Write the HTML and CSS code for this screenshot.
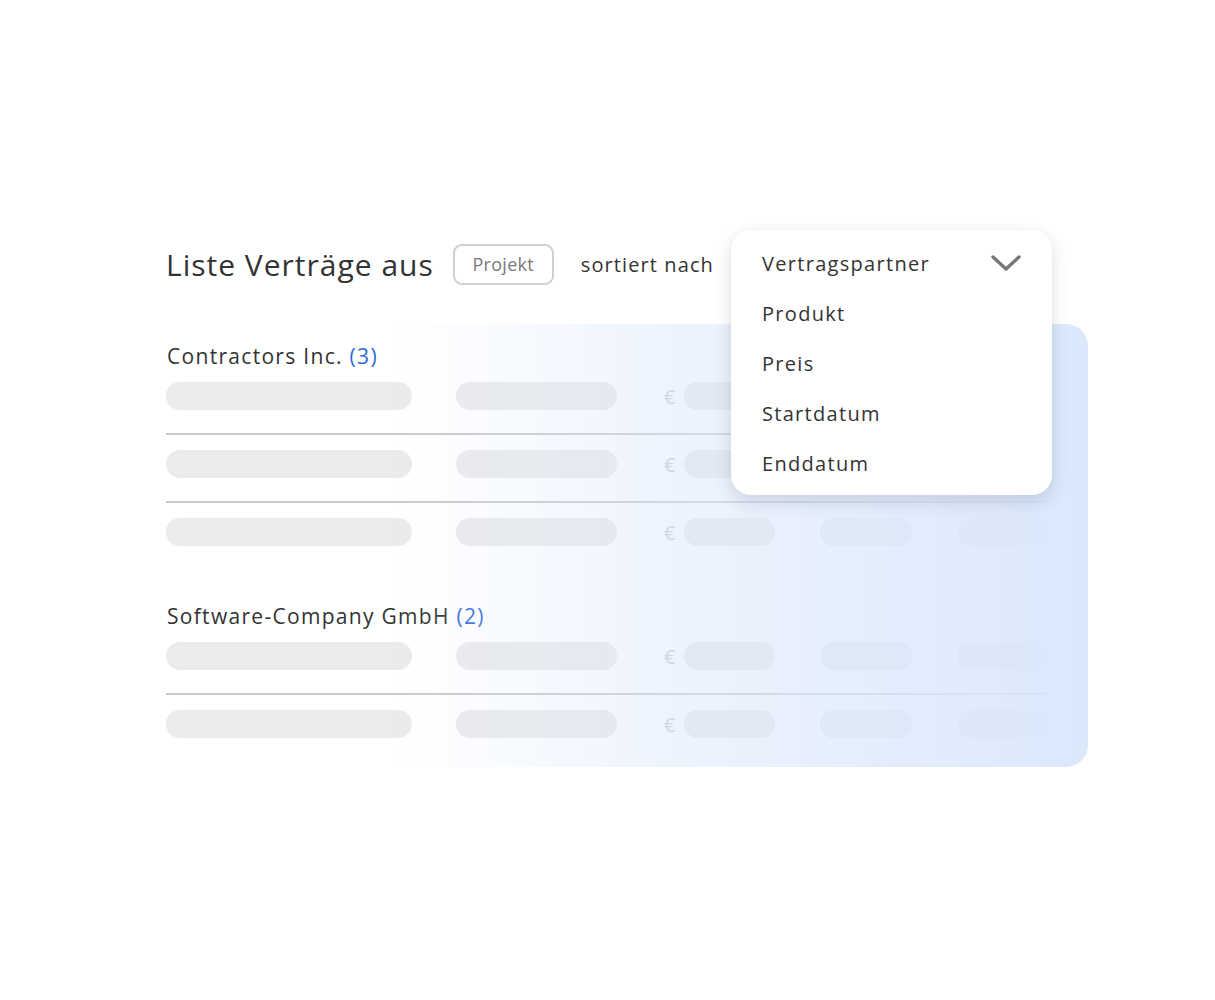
FILE: index.html
```html
<!DOCTYPE html>
<html lang="de">
<head>
    <meta charset="UTF-8">
    <meta name="viewport" content="width=device-width, initial-scale=1.0">
    <title>Verträge</title>
    <link rel="stylesheet" href="styles.css">
</head>
<body>

<div class="card">
    <div class="toolbar">
        <h1 class="title">Liste Verträge aus</h1>
        <span class="chip">Projekt</span>
        <span class="label">sortiert nach</span>
    </div>

    <ul class="dropdown">
        <li class="selected">
            Vertragspartner
            <svg class="chevron" width="30" height="16" viewBox="0 0 30 16">
                <path d="M2 2 L15 14 L28 2" fill="none" stroke="#777" stroke-width="3.4" stroke-linecap="round" stroke-linejoin="round"/>
            </svg>
        </li>
        <li>Produkt</li>
        <li>Preis</li>
        <li>Startdatum</li>
        <li>Enddatum</li>
    </ul>

    <div class="panel">
        <section class="group">
            <h2 class="group-title">Contractors Inc. <span class="count">(3)</span></h2>
            <div class="row">
                <span class="pill w1"></span><span class="pill w2"></span>
                <span class="euro">€</span><span class="pill w3"></span>
                <span class="pill w4"></span><span class="pill w5"></span>
            </div>
            <div class="row">
                <span class="pill w1"></span><span class="pill w2"></span>
                <span class="euro">€</span><span class="pill w3"></span>
                <span class="pill w4"></span><span class="pill w5"></span>
            </div>
            <div class="row">
                <span class="pill w1"></span><span class="pill w2"></span>
                <span class="euro">€</span><span class="pill w3"></span>
                <span class="pill w4"></span><span class="pill w5"></span>
            </div>
        </section>

        <section class="group">
            <h2 class="group-title">Software-Company GmbH <span class="count">(2)</span></h2>
            <div class="row">
                <span class="pill w1"></span><span class="pill w2"></span>
                <span class="euro">€</span><span class="pill w3"></span>
                <span class="pill w4"></span><span class="pill w5"></span>
            </div>
            <div class="row">
                <span class="pill w1"></span><span class="pill w2"></span>
                <span class="euro">€</span><span class="pill w3"></span>
                <span class="pill w4"></span><span class="pill w5"></span>
            </div>
        </section>
    </div>
</div>

</body>
</html>
```

FILE: styles.css
```css
body {
    margin: 0;
    background-color: #fff;
    font-family: "Open Sans", Lato, sans-serif;
    color: #333;
}

.card {
    position: relative;
    width: 948px;
    margin: 230px 0 0 140px;
}

.toolbar {
    display: flex;
    align-items: center;
    height: 68px;
    padding-left: 26px;
}

.title {
    margin: 0;
    font-size: 30px;
    font-weight: 400;
    letter-spacing: 1px;
    color: #333;
}

.chip {
    display: inline-flex;
    align-items: center;
    justify-content: center;
    box-sizing: border-box;
    width: 101px;
    height: 41px;
    margin-left: 19px;
    border: 2px solid #cfcfcf;
    border-radius: 9px;
    font-size: 18px;
    letter-spacing: 0.3px;
    color: #7a7a7a;
}

.label {
    margin-left: 27px;
    font-size: 20px;
    letter-spacing: 1.1px;
    color: #333;
}

.dropdown {
    position: absolute;
    top: 0;
    left: 591px;
    z-index: 2;
    box-sizing: border-box;
    width: 321px;
    margin: 0;
    padding: 8px 0 7px;
    list-style: none;
    background: #fff;
    border-radius: 20px;
    box-shadow: 0 8px 18px rgba(40, 50, 70, 0.13), 0 0 12px rgba(0, 0, 0, 0.04);
}

.dropdown li {
    display: flex;
    align-items: center;
    justify-content: space-between;
    height: 50px;
    padding: 0 31px;
    font-size: 20px;
    letter-spacing: 1.3px;
    color: #333;
}

.panel {
    position: relative;
    margin-top: 26px;
    padding: 20px 38px 29px 26px;
    border-radius: 22px;
    background: #fff;
}

/* blue wash laid over the rows, so pills fade into it */
.panel::after {
    content: "";
    position: absolute;
    inset: 0;
    border-radius: 22px;
    pointer-events: none;
    background: linear-gradient(90deg,
        rgba(218, 231, 252, 0) 0%,
        rgba(218, 231, 252, 0) 27%,
        rgba(218, 231, 252, 0.45) 55%,
        rgba(218, 231, 252, 0.75) 80%,
        rgba(218, 231, 252, 0.97) 100%);
}

.group + .group {
    margin-top: 58px;
}

.group-title {
    margin: 0 0 14px 1px;
    height: 24px;
    line-height: 24px;
    font-size: 21px;
    font-weight: 400;
    letter-spacing: 1.3px;
    color: #333;
}

.count {
    color: #2f6bd8;
}

.row {
    display: flex;
    align-items: center;
    padding: 15px 0 23px;
    border-bottom: 2px solid #cacaca;
}

.group .row:first-of-type {
    padding-top: 0;
}

.row:last-child {
    border-bottom: 0;
    padding-bottom: 0;
}

.pill {
    height: 28px;
    border-radius: 14px;
    background: #ebebeb;
}

.w1 { width: 246px; }
.w2 { width: 161px; margin-left: 44px; }
.w3 { width: 91px; margin-left: 7px; }
.w4 { width: 92px; margin-left: 45px; }
.w5 { width: 92px; margin-left: 45px; }

.euro {
    width: 13px;
    margin-left: 47px;
    font-size: 20px;
    color: #c8c8c8;
}
```
